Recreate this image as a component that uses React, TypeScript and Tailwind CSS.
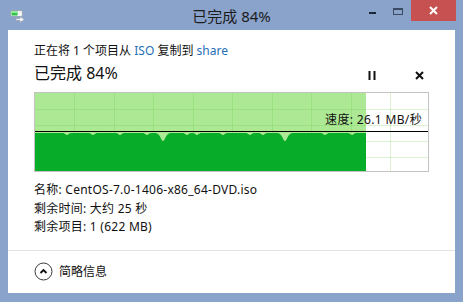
import { type FC } from "react";

const FONT = '"Segoe UI", "Noto Sans", "Noto Sans CJK SC", sans-serif';

// 速度グラフのくぼみ (x, 深さ, 半幅)
const dips: [number, number, number][] = [
  [33, 2, 5],
  [59, 2, 5],
  [86, 2, 5],
  [113, 2, 5],
  [129, 8, 8],
  [153, 2, 5],
  [163, 2, 5],
  [189, 2, 5],
  [216, 2, 5],
  [229, 2, 5],
  [251, 8, 8],
  [291, 2, 5],
  [318, 2, 5],
];

const FILL_W = 332;
const TOP = 41;

const buildPath = () => {
  let d = `M1 79 L1 ${TOP}`;
  for (const [x, depth, w] of dips) {
    d += ` L${x - w} ${TOP} C${x - w / 3} ${TOP} ${x - w / 4} ${TOP + depth} ${x} ${TOP + depth} C${x + w / 4} ${TOP + depth} ${x + w / 3} ${TOP} ${x + w} ${TOP}`;
  }
  d += ` L${FILL_W} ${TOP} L${FILL_W} 79 Z`;
  return d;
};

const SpeedChart: FC = () => {
  const vLines = Array.from({ length: 9 }, (_, i) => Math.round(40 + i * 39.5));
  const hLines = [17, 33, 49, 65];
  return (
    <div className="relative h-[80px] w-[395px]">
      <svg width="395" height="80" viewBox="0 0 395 80" className="block">
        <rect x="0" y="0" width="395" height="80" fill="#ffffff" />
        <rect x="1" y="1" width={FILL_W - 1} height="78" fill="#ade895" />
        {vLines.map((x) => (
          <line key={x} x1={x + 0.5} y1="1" x2={x + 0.5} y2="79" stroke="#5cc23c" strokeOpacity="0.22" />
        ))}
        {hLines.map((y) => (
          <line key={y} x1="1" y1={y + 0.5} x2="394" y2={y + 0.5} stroke="#5cc23c" strokeOpacity="0.22" />
        ))}
        <path d={buildPath()} fill="#07ad28" />
        <line x1="1" y1="39.5" x2="394" y2="39.5" stroke="#000000" />
        <rect x="0.5" y="0.5" width="394" height="79" fill="none" stroke="#c3c3c3" />
      </svg>
      <div className="absolute right-[7px] top-[19px] text-[12px] leading-[18px] tracking-[0.35px] text-[#111]">
        速度: 26.1 MB/秒
      </div>
    </div>
  );
};

const CopyIcon: FC = () => (
  <svg width="16" height="15" viewBox="0 0 16 15">
    <rect x="0.5" y="2.5" width="12" height="6" rx="1.5" fill="#f2f2f2" stroke="#9aa6b8" />
    <rect x="1.5" y="3.5" width="6" height="4" fill="#2fc14a" />
    <rect x="1.5" y="3.5" width="6" height="1.5" fill="#8ef09a" />
    <path d="M6 10.5 H10 V8.5 L14.5 11.5 L10 14.5 V12.5 H6 Z" fill="#f4f4f4" stroke="#9aa6b8" strokeWidth="0.8" />
  </svg>
);

export default function App() {
  return (
    <div
      className="flex h-[302px] w-[463px] flex-col bg-[#8aa3cb]"
      style={{ fontFamily: FONT }}
    >
      {/* タイトルバー */}
      <div className="grid h-[30px] grid-cols-[1fr_auto_1fr]">
        <div className="flex items-start pl-[10px] pt-[8px]">
          <CopyIcon />
        </div>
        <div className="flex items-center pt-[2px] text-[15px] text-[#1b1b1b]">已完成 84%</div>
        <div className="flex items-start justify-end pr-[7px]">
          <div className="flex h-[21px] w-[26px] items-start justify-center pt-[12px]">
            <div className="h-[2px] w-[7px] bg-[#1c2536]" />
          </div>
          <div className="flex h-[21px] w-[26px] items-start justify-center pt-[8px]">
            <div className="h-[7px] w-[10px] border border-t-2 border-[#3d4a63]" />
          </div>
          <div className="flex h-[21px] w-[45px] items-center justify-center bg-[#c75050]">
            <svg width="9" height="9" viewBox="0 0 9 9">
              <path d="M1 1 L8 8 M8 1 L1 8" stroke="#ffffff" strokeWidth="2" />
            </svg>
          </div>
        </div>
      </div>

      {/* クライアント領域 */}
      <div className="mx-[8px] mb-[9px] flex flex-1 flex-col bg-white text-[#111]">
        <div className="px-[26px] pt-[12px]">
          <div className="h-[18px] text-[12px] leading-[18px]">
            正在将 1 个项目从 <span className="text-[#1f6fb8]">ISO</span> 复制到{" "}
            <span className="text-[#1f6fb8]">share</span>
          </div>

          <div className="mt-[2px] flex h-[22px] items-center justify-between">
            <div className="text-[16px] leading-[22px]">已完成 84%</div>
            <div className="mt-[4px] flex items-center gap-[39px] pr-[5px]">
              <svg width="8" height="9" viewBox="0 0 8 9">
                <rect x="0.5" y="0" width="2" height="9" fill="#111" />
                <rect x="5.5" y="0" width="2" height="9" fill="#111" />
              </svg>
              <svg width="9" height="9" viewBox="0 0 9 9">
                <path d="M1 1 L8 8 M8 1 L1 8" stroke="#111" strokeWidth="2" />
              </svg>
            </div>
          </div>

          <div className="mt-[8px]">
            <SpeedChart />
          </div>

          <div className="mt-[9px] text-[12px] leading-[18.5px] tracking-[0.25px]">
            <div>名称: CentOS-7.0-1406-x86_64-DVD.iso</div>
            <div>剩余时间: 大约 25 秒</div>
            <div>剩余项目: 1 (622 MB)</div>
          </div>
        </div>

        <div className="mt-[13px] border-t border-[#e3e3e3]" />

        <div className="flex flex-1 items-center gap-[6px] px-[26px]">
          <svg width="19" height="19" viewBox="0 0 19 19">
            <circle cx="9.5" cy="9.5" r="8.5" fill="none" stroke="#3a3a3a" />
            <path d="M6.5 11 L9.5 8 L12.5 11" fill="none" stroke="#111" strokeWidth="1.8" />
          </svg>
          <span className="text-[12px] leading-[18px]">简略信息</span>
        </div>
      </div>
    </div>
  );
}
